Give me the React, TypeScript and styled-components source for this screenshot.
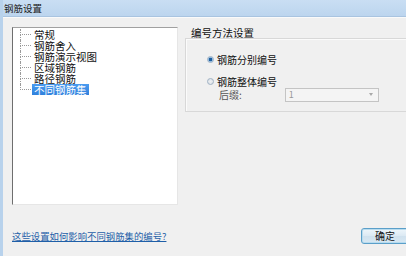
import React from "react";
import styled, { createGlobalStyle } from "styled-components";

const Global = createGlobalStyle`
  html, body { margin: 0; padding: 0; background: #f0f0f0; }
  body { font-family: "Noto Sans CJK SC", "Noto Sans", sans-serif; }
`;

const Window = styled.div`
  width: 406px;
  height: 256px;
  display: flex;
  flex-direction: column;
  background: #f0f0f0;
  border-left: 3px solid #b8d2ec;
  box-sizing: border-box;
  overflow: hidden;
`;

const TitleBar = styled.div`
  height: 17px;
  flex: none;
  display: flex;
  align-items: center;
  padding-left: 1px;
  background: linear-gradient(#c9def3, #bcd5ee);
  border-bottom: 1px solid #a9c4e0;
  font-size: 9.5px;
  color: #1a1a1a;
  box-sizing: border-box;
`;

const Body = styled.div`
  flex: 1;
  display: flex;
  flex-direction: column;
  padding: 9px 0 0 9px;
  border-top: 1px solid #fafafa;
`;

const MainRow = styled.div`
  display: flex;
  align-items: flex-start;
`;

const TreeBox = styled.div`
  width: 166px;
  height: 178px;
  flex: none;
  background: #fff;
  box-sizing: border-box;
  border-top: 1px solid #a0a0a0;
  border-left: 1px solid #6e6e6e;
  border-right: 1px solid #e6e6e6;
  border-bottom: 1px solid #e6e6e6;
  padding: 1px 0 0 7px;
`;

const TreeRow = styled.div`
  display: flex;
  height: 11px;
  align-items: stretch;
`;

const Connector = styled.div`
  width: 11px;
  flex: none;
  display: flex;
  flex-direction: column;
`;

const ConnTop = styled.div`
  flex: 1;
  border-left: 1px dotted #9a9a9a;
  border-bottom: 1px dotted #9a9a9a;
`;

const ConnBottom = styled.div<{ $last?: boolean }>`
  flex: 1;
  border-left: 1px dotted ${(p) => (p.$last ? "transparent" : "#9a9a9a")};
`;

const TreeLabel = styled.div<{ $selected?: boolean }>`
  font-size: 10.5px;
  line-height: 11px;
  height: 11px;
  padding: 0 2px;
  margin-left: 1px;
  color: ${(p) => (p.$selected ? "#fff" : "#111")};
  background: ${(p) => (p.$selected ? "linear-gradient(#4b9cf0, #2f80dc)" : "transparent")};
  white-space: nowrap;
`;

const RightPanel = styled.div`
  flex: 1;
  display: flex;
  flex-direction: column;
  padding-left: 7px;
`;

const GroupTitle = styled.div`
  font-size: 10.5px;
  line-height: 11px;
  height: 10px;
  color: #111;
  padding-left: 6px;
`;

const GroupBox = styled.div`
  margin-top: 1px;
  height: 74px;
  border: 1px solid #d8d8d8;
  border-right: none;
  box-shadow: inset 1px 1px 0 #fbfbfb;
  display: flex;
  flex-direction: column;
  padding: 14px 0 0 21px;
  box-sizing: border-box;
`;

const RadioRow = styled.label`
  display: flex;
  align-items: center;
  gap: 3px;
  height: 12px;
  font-size: 10px;
  color: #111;
  margin-bottom: 10px;
`;

const Radio = styled.span<{ $checked?: boolean }>`
  width: 7px;
  height: 7px;
  border-radius: 50%;
  box-sizing: border-box;
  border: 1px solid #9fb2c4;
  background: ${(p) =>
    p.$checked
      ? "radial-gradient(circle, #1f5f9f 0 1.6px, #8cb8e0 2px, #e8eef4 3.5px)"
      : "radial-gradient(circle, #eef1f4, #d8dde2)"};
`;

const SuffixRow = styled.div`
  display: flex;
  align-items: center;
  margin-top: -10px;
  padding-left: 12px;
  gap: 43px;
`;

const SuffixLabel = styled.span`
  font-size: 10px;
  color: #555;
`;

const Combo = styled.div`
  width: 94px;
  height: 14px;
  box-sizing: border-box;
  border: 1px solid #c4c4c4;
  background: #f4f4f4;
  display: flex;
  align-items: center;
  justify-content: space-between;
  padding: 0 5px 0 3px;
  font-size: 9px;
  color: #999;
`;

const Arrow = styled.span`
  width: 0;
  height: 0;
  border-left: 2.5px solid transparent;
  border-right: 2.5px solid transparent;
  border-top: 3px solid #a8a8a8;
`;

const Footer = styled.div`
  display: flex;
  align-items: center;
  justify-content: space-between;
  margin-top: 23px;
`;

const HelpLink = styled.a`
  font-size: 9.4px;
  color: #1f5fa8;
  text-decoration: underline;
  cursor: pointer;
`;

const OkButton = styled.button`
  width: 50px;
  height: 16px;
  margin-right: -5px;
  box-sizing: border-box;
  border: 1px solid #5b9fc9;
  border-radius: 3px;
  background: linear-gradient(#eef6fb, #dbe9f3 50%, #cfe1ee 51%, #d8e8f3);
  box-shadow: inset 0 0 0 1px #b8dcef;
  font-family: "Noto Sans CJK SC", sans-serif;
  font-size: 10px;
  color: #111;
  text-align: left;
  padding: 0 0 0 13px;
  line-height: 12px;
`;

const items = ["常规", "钢筋舍入", "钢筋演示视图", "区域钢筋", "路径钢筋", "不同钢筋集"];

export default function App() {
  return (
    <>
      <Global />
      <Window>
        <TitleBar>钢筋设置</TitleBar>
        <Body>
          <MainRow>
            <TreeBox>
              {items.map((t, i) => (
                <TreeRow key={t}>
                  <Connector>
                    <ConnTop />
                    <ConnBottom $last={i === items.length - 1} />
                  </Connector>
                  <TreeLabel $selected={i === items.length - 1}>{t}</TreeLabel>
                </TreeRow>
              ))}
            </TreeBox>
            <RightPanel>
              <GroupTitle>编号方法设置</GroupTitle>
              <GroupBox>
                <RadioRow>
                  <Radio $checked />
                  钢筋分别编号
                </RadioRow>
                <RadioRow>
                  <Radio />
                  钢筋整体编号
                </RadioRow>
                <SuffixRow>
                  <SuffixLabel>后缀:</SuffixLabel>
                  <Combo>
                    1
                    <Arrow />
                  </Combo>
                </SuffixRow>
              </GroupBox>
            </RightPanel>
          </MainRow>
          <Footer>
            <HelpLink>这些设置如何影响不同钢筋集的编号?</HelpLink>
            <OkButton>确定</OkButton>
          </Footer>
        </Body>
      </Window>
    </>
  );
}
